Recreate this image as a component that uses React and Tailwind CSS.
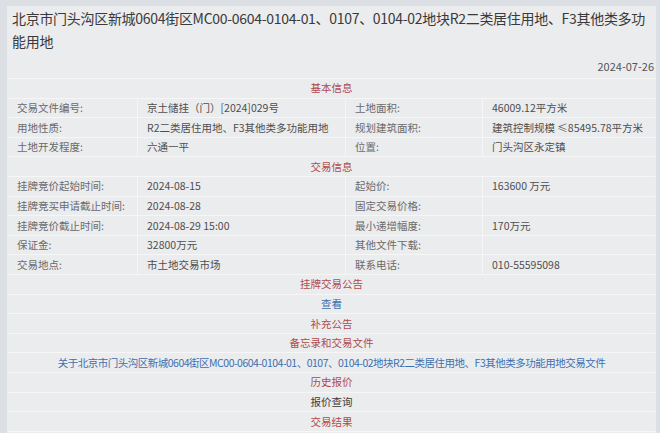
import React from 'react';

const basic = [
  ['交易文件编号:', '京土储挂（门）[2024]029号', '土地面积:', '46009.12平方米'],
  ['用地性质:', 'R2二类居住用地、F3其他类多功能用地', '规划建筑面积:', '建筑控制规模 ≤85495.78平方米'],
  ['土地开发程度:', '六通一平', '位置:', '门头沟区永定镇'],
];

const trade = [
  ['挂牌竞价起始时间:', '2024-08-15', '起始价:', '163600 万元'],
  ['挂牌竞买申请截止时间:', '2024-08-28', '固定交易价格:', ''],
  ['挂牌竞价截止时间:', '2024-08-29 15:00', '最小递增幅度:', '170万元'],
  ['保证金:', '32800万元', '其他文件下载:', ''],
  ['交易地点:', '市土地交易市场', '联系电话:', '010-55595098'],
];

const tail = [
  { text: '挂牌交易公告', color: 'text-[#b04a4c]' },
  { text: '查看', color: 'text-[#3f6fae]' },
  { text: '补充公告', color: 'text-[#b04a4c]' },
  { text: '备忘录和交易文件', color: 'text-[#b04a4c]' },
  { text: '关于北京市门头沟区新城0604街区MC00-0604-0104-01、0107、0104-02地块R2二类居住用地、F3其他类多功能用地交易文件', color: 'text-[#3f6fae] tracking-[-0.5px]' },
  { text: '历史报价', color: 'text-[#b04a4c]' },
  { text: '报价查询', color: 'text-[#3a3a3a]' },
  { text: '交易结果', color: 'text-[#b04a4c]' },
];

function Section({ title }) {
  return (
    <div className="h-[19.6px] flex items-center justify-center border-b border-[#f6f6f7] text-[#b04a4c]">
      {title}
    </div>
  );
}

function Row({ cells }) {
  return (
    <div className="h-[19.6px] grid grid-cols-[129px_208px_137px_1fr] border-b border-[#f6f6f7]">
      {cells.map((c, i) => (
        <div
          key={i}
          className={`flex items-center pl-[9px] whitespace-nowrap overflow-hidden ${i > 0 ? 'border-l border-[#f6f6f7]' : ''} ${i % 2 === 0 ? 'text-[#6a6a6a]' : 'text-[#4e4e4e]'}`}
        >
          {c}
        </div>
      ))}
    </div>
  );
}

export default function App() {
  return (
    <div
      className="w-[660px] h-[433px] overflow-hidden bg-[#dcdfe3] pl-[7px] pr-[4px] pt-[6px]"
      style={{ fontFamily: '"Noto Sans CJK SC", "Noto Sans", sans-serif' }}
    >
      <div className="bg-[#ebecee] h-full">
        <div className="px-[5px] pt-[1px]">
          <h1 className="text-[14px] tracking-[-0.3px] leading-[23px] text-[#3a3a3a] font-normal">
            北京市门头沟区新城0604街区MC00-0604-0104-01、0107、0104-02地块R2二类居住用地、F3其他类多功能用地
          </h1>
          <div className="text-right text-[11px] text-[#555] leading-[14px] mt-[6px] -mr-[3px]">2024-07-26</div>
        </div>
        <div className="mt-[5px] ml-[1px] mr-[1px] text-[10.5px] border-t border-[#f6f6f7]">
          <Section title="基本信息" />
          {basic.map((r, i) => <Row key={i} cells={r} />)}
          <Section title="交易信息" />
          {trade.map((r, i) => <Row key={i} cells={r} />)}
          {tail.map((t, i) => (
            <div key={i} className={`h-[19.6px] flex items-center justify-center border-b border-[#f6f6f7] whitespace-nowrap ${t.color}`}>
              {t.text}
            </div>
          ))}
        </div>
      </div>
    </div>
  );
}
